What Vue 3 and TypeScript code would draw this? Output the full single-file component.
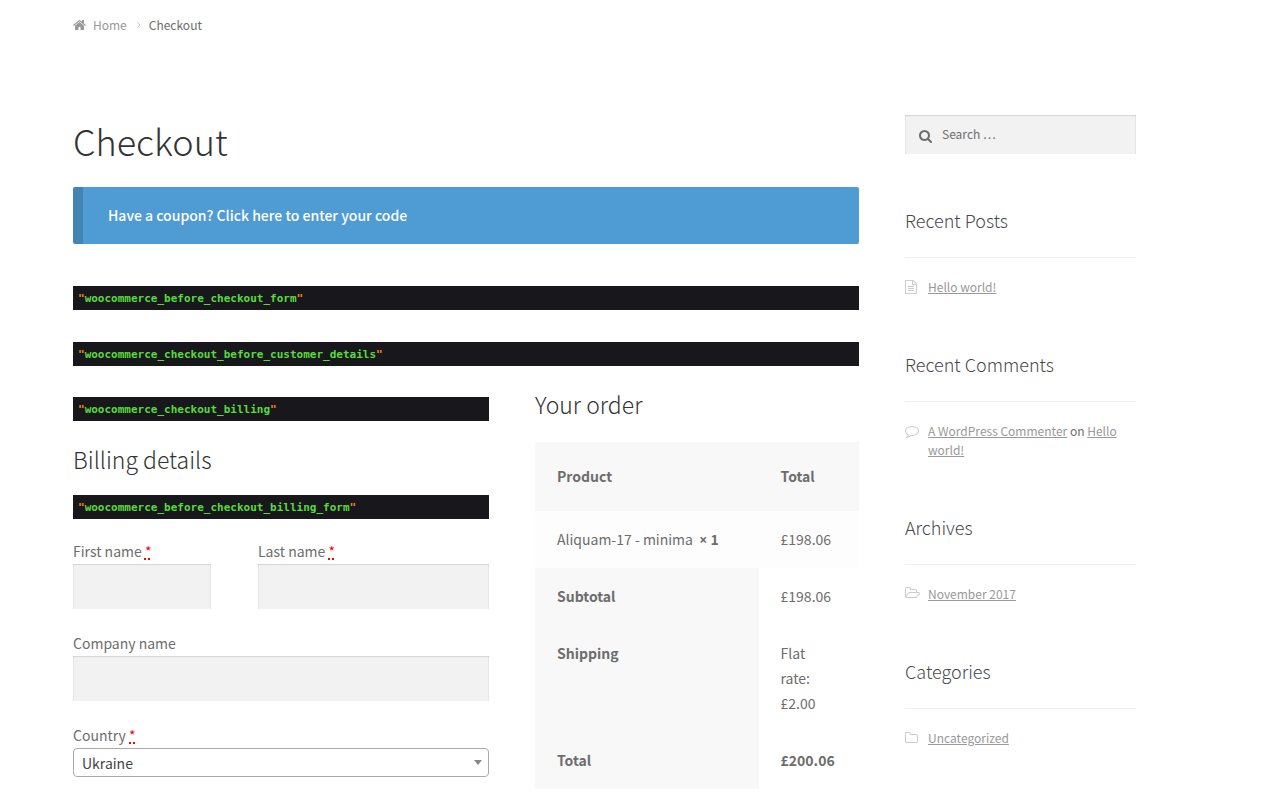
<script setup lang="ts">
import { ref } from 'vue'

interface Widget {
  title: string
  icon: string
  viewBox: string
  parts: { text: string; link: boolean }[]
}

const icons = {
  home: 'M1472 992v480q0 26-19 45t-45 19h-384v-384h-256v384h-384q-26 0-45-19t-19-45v-480q0-1 .5-3t.5-3l575-474 575 474q1 2 1 6zm223-69l-62 74q-8 9-21 11h-3q-13 0-21-7l-692-577-692 577q-12 8-24 7-13-2-21-11l-62-74q-8-10-7-23.5t11-21.5l719-599q32-26 76-26t76 26l244 204v-195q0-14 9-23t23-9h192q14 0 23 9t9 23v408l219 182q10 8 11 21.5t-7 23.5z',
  search: 'M1216 832q0-185-131.5-316.500t-316.500-131.500-316.500 131.500-131.500 316.500 131.500 316.500 316.500 131.500 316.500-131.500 131.500-316.500zm512 832q0 52-38 90t-90 38q-54 0-90-38l-343-342q-179 124-399 124-143 0-273.500-55.500t-225-150-150-225-55.500-273.500 55.500-273.500 150-225 225-150 273.500-55.500 273.500 55.500 225 150 150 225 55.500 273.500q0 220-124 399l343 343q37 37 37 90z',
  file: 'M1596 380q28 28 48 76t20 88v1152q0 40-28 68t-68 28h-1344q-40 0-68-28t-28-68v-1600q0-40 28-68t68-28h896q40 0 88 20t76 48zm-444-244v376h376q-10-29-22-41l-313-313q-12-12-41-22zm384 1528v-1024h-416q-40 0-68-28t-28-68v-416h-768v1536h1280zm-1024-864q0-14 9-23t23-9h704q14 0 23 9t9 23v64q0 14-9 23t-23 9h-704q-14 0-23-9t-9-23v-64zm736 224q14 0 23 9t9 23v64q0 14-9 23t-23 9h-704q-14 0-23-9t-9-23v-64q0-14 9-23t23-9h704zm0 256q14 0 23 9t9 23v64q0 14-9 23t-23 9h-704q-14 0-23-9t-9-23v-64q0-14 9-23t23-9h704z',
  comment: 'M896 384q-204 0-381.500 69.500t-282 187.500-104.500 255q0 112 71.500 213.500t201.500 175.500l87 50-27 96q-24 91-70 172 152-63 275-171l43-38 57 6q69 8 130 8 204 0 381.500-69.500t282-187.500 104.500-255-104.500-255-282-187.500-381.500-69.500zm896 512q0 174-120 321.500t-326 233-450 85.500q-70 0-145-8-198 175-460 242-49 14-114 22h-5q-15 0-27-10.500t-16-27.500v-1q-3-4-.5-12t2-10 4.500-9.500l6-9 7-8.500 8-9q7-8 31-34.500t34.500-38 31-39.500 32.500-51 27-59 26-76q-157-89-247.500-220t-90.500-281q0-174 120-321.500t326-233 450-85.500 450 85.500 326 233 120 321.500z',
  folderOpen: 'M1781 803q0-35-53-35h-1088q-40 0-85.500 21.500t-71.500 52.500l-294 363q-18 24-18 40 0 35 53 35h1088q40 0 86-22t71-53l294-363q18-22 18-39zm-1141-163h768v-160q0-40-28-68t-68-28h-576q-40 0-68-28t-28-68v-64q0-40-28-68t-68-28h-320q-40 0-68 28t-28 68v853l256-315q44-53 116-87.500t140-34.500zm1269 163q0 62-46 120l-295 363q-43 53-116 87.500t-140 34.500h-1088q-92 0-158-66t-66-158v-960q0-92 66-158t158-66h320q92 0 158 66t66 158v32h544q92 0 158 66t66 158v160h192q54 0 99 24.500t67 70.500q15 32 15 68z',
  folder: 'M1600 1312v-704q0-40-28-68t-68-28h-704q-40 0-68-28t-28-68v-64q0-40-28-68t-68-28h-320q-40 0-68 28t-28 68v960q0 40 28 68t68 28h1216q40 0 68-28t28-68zm128-704v704q0 92-66 158t-158 66h-1216q-92 0-158-66t-66-158v-960q0-92 66-158t158-66h320q92 0 158 66t66 158v32h672q92 0 158 66t66 158z',
}

const widgets: Widget[] = [
  { title: 'Recent Posts', icon: icons.file, viewBox: '128 0 1536 1792', parts: [{ text: 'Hello world!', link: true }] },
  {
    title: 'Recent Comments',
    icon: icons.comment,
    viewBox: '0 0 1792 1792',
    parts: [
      { text: 'A WordPress Commenter', link: true },
      { text: ' on ', link: false },
      { text: 'Hello world!', link: true },
    ],
  },
  { title: 'Archives', icon: icons.folderOpen, viewBox: '0 0 1920 1792', parts: [{ text: 'November 2017', link: true }] },
  { title: 'Categories', icon: icons.folder, viewBox: '64 0 1664 1792', parts: [{ text: 'Uncategorized', link: true }] },
]

const firstName = ref('')
const lastName = ref('')
const company = ref('')
const country = ref('Ukraine')
const query = ref('')
</script>

<template>
  <div class="page">
    <nav class="breadcrumb" aria-label="Breadcrumb">
      <a href="#" class="crumb">
        <svg class="icon" viewBox="64 0 1664 1792" preserveAspectRatio="xMinYMid meet" aria-hidden="true"><path :d="icons.home" /></svg>
        Home
      </a>
      <svg class="chevron" viewBox="0 0 5 8" aria-hidden="true"><path d="M1 1l3 3-3 3" /></svg>
      <span>Checkout</span>
    </nav>

    <div class="content">
      <main>
        <h1>Checkout</h1>
        <div class="notice"><a href="#">Have a coupon? Click here to enter your code</a></div>
        <div class="hook hook-first"><i>"</i>woocommerce_before_checkout_form<i>"</i></div>
        <div class="hook hook-second"><i>"</i>woocommerce_checkout_before_customer_details<i>"</i></div>

        <div class="checkout">
          <form class="billing" @submit.prevent>
            <div class="hook"><i>"</i>woocommerce_checkout_billing<i>"</i></div>
            <h2>Billing details</h2>
            <div class="hook"><i>"</i>woocommerce_before_checkout_billing_form<i>"</i></div>
            <div class="fields">
              <div class="names">
                <div class="field">
                  <label for="first">First name <abbr title="required">*</abbr></label>
                  <input id="first" v-model="firstName" type="text" />
                </div>
                <div class="field">
                  <label for="last">Last name <abbr title="required">*</abbr></label>
                  <input id="last" v-model="lastName" type="text" />
                </div>
              </div>
              <div class="field">
                <label for="company">Company name</label>
                <input id="company" v-model="company" type="text" />
              </div>
              <div class="field">
                <label for="country">Country <abbr title="required">*</abbr></label>
                <div class="select">
                  <select id="country" v-model="country">
                    <option>Ukraine</option>
                  </select>
                </div>
              </div>
            </div>
          </form>

          <section class="order">
            <h2>Your order</h2>
            <table>
              <thead>
                <tr><th>Product</th><th>Total</th></tr>
              </thead>
              <tbody>
                <tr><td>Aliquam-17 - minima&nbsp; <strong><span class="times">×</span> 1</strong></td><td>£198.06</td></tr>
              </tbody>
              <tfoot>
                <tr><th>Subtotal</th><td>£198.06</td></tr>
                <tr><th>Shipping</th><td>Flat rate: £2.00</td></tr>
                <tr><th>Total</th><td><strong>£200.06</strong></td></tr>
              </tfoot>
            </table>
          </section>
        </div>
      </main>

      <aside>
        <form class="search" role="search" @submit.prevent>
          <svg class="icon" viewBox="64 0 1664 1792" preserveAspectRatio="xMinYMid meet" aria-hidden="true"><path :d="icons.search" /></svg>
          <input v-model="query" type="search" placeholder="Search …" aria-label="Search" />
        </form>
        <section v-for="w in widgets" :key="w.title" class="widget">
          <h3>{{ w.title }}</h3>
          <ul>
            <li>
              <svg class="icon" :viewBox="w.viewBox" preserveAspectRatio="xMinYMid meet" aria-hidden="true"><path :d="w.icon" /></svg>
              <span><template v-for="p in w.parts" :key="p.text"><a v-if="p.link" href="#">{{ p.text }}</a><template v-else>{{ p.text }}</template></template></span>
            </li>
          </ul>
        </section>
      </aside>
    </div>
  </div>
</template>

<style>
body {
  margin: 0;
  background: #fff;
  overflow-x: hidden;
}
</style>

<style scoped>
.page {
  padding: 12px 131px 15px 73px;
  color: #6d6d6d;
  font-family: "Noto Sans CJK SC", "Open Sans", sans-serif;
  font-size: 14px;
  line-height: 25px;
}
.page * {
  box-sizing: border-box;
}
.icon {
  flex: none;
  width: 15px;
  height: 14px;
  fill: currentColor;
}
.breadcrumb {
  display: flex;
  align-items: center;
  font-size: 12px;
}
.crumb {
  display: flex;
  align-items: center;
  gap: 5px;
  color: #999;
  text-decoration: none;
}
.chevron {
  width: 5px;
  height: 8px;
  margin: 0 8px 0 9px;
  fill: none;
  stroke: #ccc;
}
.content {
  display: grid;
  grid-template-columns: 786fr 231fr;
  column-gap: 46px;
  align-items: start;
  margin-top: 78px;
}
h1,
h2,
h3 {
  margin: 0;
  font-weight: 300;
}
h1 {
  color: #333;
  font-size: 36px;
  line-height: 50px;
}
h2 {
  color: #333;
  font-size: 23px;
  line-height: 30px;
}
.notice {
  margin: 22px 0 42px;
  padding: 16px 25px;
  border-left: 10px solid #4285b4;
  border-radius: 2px;
  background: #4f9bd3;
}
.notice a {
  color: #fff;
  font-weight: 500;
  text-decoration: none;
}
.hook {
  padding: 2px 5px 0;
  background: #18171b;
  color: #56db3a;
  font: bold 11px/22px "DejaVu Sans Mono", monospace;
}
.hook i {
  color: #ff8400;
  font-style: normal;
}
.hook-second {
  margin: 32px 0 31px;
}
.checkout {
  display: grid;
  grid-template-columns: 416fr 324fr;
  column-gap: 46px;
  align-items: start;
}
.billing h2 {
  margin: 23px 0 21px;
}
.fields {
  display: grid;
  gap: 21px;
  margin-top: 19px;
}
.names {
  display: grid;
  grid-template-columns: 138fr 231fr;
  column-gap: 47px;
}
label {
  display: block;
  line-height: 26px;
}
abbr {
  color: red;
  text-decoration: underline dotted 2px;
}
input {
  display: block;
  width: 100%;
  border: 0;
  border-radius: 0;
  outline: 0;
  background: #f2f2f2;
  box-shadow: inset 0 1px 1px rgba(0, 0, 0, 0.125), inset 1px 0 0 #e8e8e8, inset -1px 0 0 #e8e8e8;
  color: #43454b;
  font: inherit;
}
.field input {
  height: 45px;
  padding: 0 10px;
}
.select {
  position: relative;
}
.select::after {
  position: absolute;
  top: 12px;
  right: 7px;
  border: 4px solid transparent;
  border-top: 5px solid #888;
  border-bottom: 0;
  content: "";
  pointer-events: none;
}
select {
  display: block;
  width: 100%;
  height: 29px;
  padding: 2px 8px 0;
  border: 1px solid #aaa;
  border-radius: 4px;
  background: #fff;
  color: #444;
  font: inherit;
  appearance: none;
}
.order h2 {
  margin: -8px 0 23px;
}
table {
  width: 100%;
  border-collapse: collapse;
  table-layout: fixed;
}
th,
td {
  padding: 16px 22px;
  text-align: left;
  vertical-align: top;
}
th {
  background: #f8f8f8;
  font-weight: 700;
}
th:first-child {
  width: 69%;
}
thead th {
  padding: 22px;
}
tbody td {
  background: #fdfdfd;
}
.times {
  font-family: "Open Sans", sans-serif;
}
.search {
  position: relative;
  margin-bottom: 53px;
}
.search .icon {
  position: absolute;
  top: 14px;
  left: 14px;
}
.search input {
  height: 39px;
  padding: 0 14px 2px 37px;
  font-size: 12px;
  appearance: none;
}
.search input::placeholder {
  color: #6d6d6d;
  opacity: 1;
}
.widget {
  margin-bottom: 55px;
  font-size: 12px;
  line-height: 19px;
}
.widget:last-child {
  margin-bottom: 0;
}
.widget h3 {
  padding-bottom: 23px;
  border-bottom: 1px solid #f0f0f0;
  color: #484848;
  font-size: 18px;
  line-height: 27px;
}
.widget ul {
  margin: 19px 0 0;
  padding: 0;
  list-style: none;
}
.widget li {
  display: flex;
  gap: 8px;
}
.widget .icon {
  margin-top: 3px;
  color: #ccc;
}
.widget a {
  color: #999;
}
</style>
